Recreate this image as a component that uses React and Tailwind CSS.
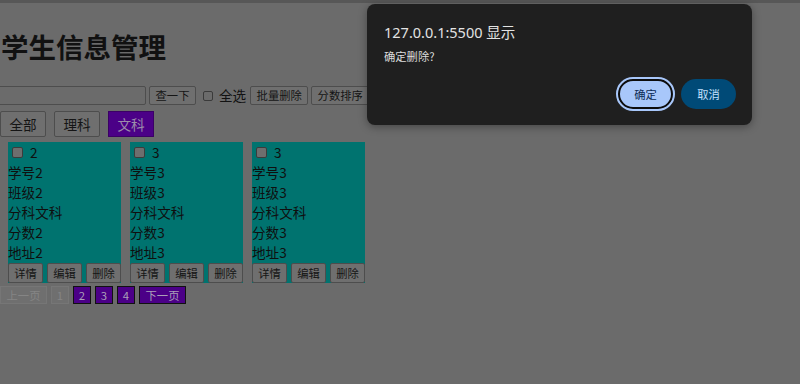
import React from "react";

const cjk = { fontFamily: '"Noto Sans CJK SC", "Noto Sans", sans-serif' };

function Box({ className = "" }) {
  return (
    <span
      className={
        "inline-block w-[11px] h-[11px] rounded-[2px] border border-[#3c3c3c] bg-[#6e6e6e] " +
        className
      }
    />
  );
}

function GrayBtn({ children, className = "" }) {
  return (
    <div
      className={
        "flex items-center justify-center border border-[#4d4d4d] bg-[#6f6f6f] rounded-[2px] text-[#151515] text-[11.3px] " +
        className
      }
    >
      {children}
    </div>
  );
}

const cards = [
  { n: 2, id: "学号2", cls: "班级2", sub: "分科文科", score: "分数2", addr: "地址2" },
  { n: 3, id: "学号3", cls: "班级3", sub: "分科文科", score: "分数3", addr: "地址3" },
  { n: 3, id: "学号3", cls: "班级3", sub: "分科文科", score: "分数3", addr: "地址3" },
];

export default function App() {
  return (
    <div
      className="relative w-[800px] h-[384px] overflow-hidden bg-[#6b6b6b] text-[#0f0f0f]"
      style={cjk}
    >
      <div className="h-[3px] bg-[#575757]" />
      <h1 className="ml-[1px] mt-[24px] text-[27.5px] font-bold leading-[39px] text-[#111]">
        学生信息管理
      </h1>

      <div className="mt-[20px] flex items-center h-[19px]">
        <div className="ml-[-6px] w-[152px] h-[19px] border border-[#4d4d4d] bg-[#6b6b6b] rounded-[2px]" />
        <GrayBtn className="ml-[3px] w-[47px] h-[19px]">查一下</GrayBtn>
        <span className="ml-[7px] inline-block w-[10px] h-[10px] rounded-[2px] border border-[#3a3a3a]" />
        <span className="ml-[6px] text-[13.6px] leading-[19px] text-[#121212]">全选</span>
        <GrayBtn className="ml-[4px] w-[58px] h-[19px]">批量删除</GrayBtn>
        <GrayBtn className="ml-[3px] w-[58px] h-[19px]">分数排序</GrayBtn>
      </div>

      <div className="mt-[6px] flex items-center gap-[8px] h-[26px]">
        <GrayBtn className="w-[46px] h-[26px] !text-[13.6px]">全部</GrayBtn>
        <GrayBtn className="w-[46px] h-[26px] !text-[13.6px]">理科</GrayBtn>
        <div className="w-[46px] h-[26px] flex items-center justify-center bg-[#4b0087] border border-[#3b0066] text-[#9b8daa] text-[13.6px]">
          文科
        </div>
      </div>

      <div className="mt-[5px] ml-[8px] flex gap-[9px]">
        {cards.map((c, i) => (
          <div key={i} className="w-[113px] h-[141px] bg-[#00736f] flex flex-col text-[13.6px] leading-[20px]">
            <div className="h-[20px] flex items-center">
              <Box className="ml-[4px]" />
              <span className="ml-[7px]">{c.n}</span>
            </div>
            <div>{c.id}</div>
            <div>{c.cls}</div>
            <div>{c.sub}</div>
            <div>{c.score}</div>
            <div>{c.addr}</div>
            <div className="mt-auto flex gap-[4px] h-[20px]">
              <GrayBtn className="w-[35px] h-[20px]">详情</GrayBtn>
              <GrayBtn className="w-[35px] h-[20px]">编辑</GrayBtn>
              <GrayBtn className="w-[35px] h-[20px]">删除</GrayBtn>
            </div>
          </div>
        ))}
      </div>

      <div className="mt-[3px] flex items-center h-[18px] text-[11.3px]">
        <div className="w-[47px] h-[18px] flex items-center justify-center border border-[#767676] bg-[#6f6f6f] text-[#858585]">
          上一页
        </div>
        <div className="ml-[4px] w-[18px] h-[18px] flex items-center justify-center border border-[#767676] bg-[#6f6f6f] text-[#858585]">
          1
        </div>
        {["2", "3", "4"].map((p) => (
          <div
            key={p}
            className="ml-[4px] w-[18px] h-[18px] flex items-center justify-center border border-[#111] bg-[#4b0087] text-[#aaa0b8]"
          >
            {p}
          </div>
        ))}
        <div className="ml-[4px] w-[47px] h-[18px] flex items-center justify-center border border-[#111] bg-[#4b0087] text-[#aaa0b8]">
          下一页
        </div>
      </div>

      <div className="absolute left-[367px] top-[4px] w-[385px] h-[121px] rounded-[8px] bg-[#1f1f1f] shadow-[0_2px_8px_rgba(0,0,0,0.35)]">
        <div className="ml-[17px] mt-[18px] text-[14.5px] leading-[20px] text-[#e3e3e3]" style={{ fontFamily: '"Noto Sans", "Noto Sans CJK SC", sans-serif' }}>
          127.0.0.1:5500 显示
        </div>
        <div className="ml-[17px] mt-[6px] text-[11.3px] leading-[16px] text-[#dcdcdc]">
          确定删除?
        </div>
        <div className="absolute right-[16px] bottom-[16px] flex items-center gap-[8px]">
          <div className="w-[55px] h-[30px] rounded-full bg-[#a8c7fa] border-2 border-[#0c0c0c] outline outline-2 outline-[#a8c7fa] flex items-center justify-center text-[11.3px] text-[#0b2a55]">
            确定
          </div>
          <div className="w-[55px] h-[30px] rounded-full bg-[#004a77] flex items-center justify-center text-[11.3px] text-[#c2e0ff]">
            取消
          </div>
        </div>
      </div>
    </div>
  );
}
